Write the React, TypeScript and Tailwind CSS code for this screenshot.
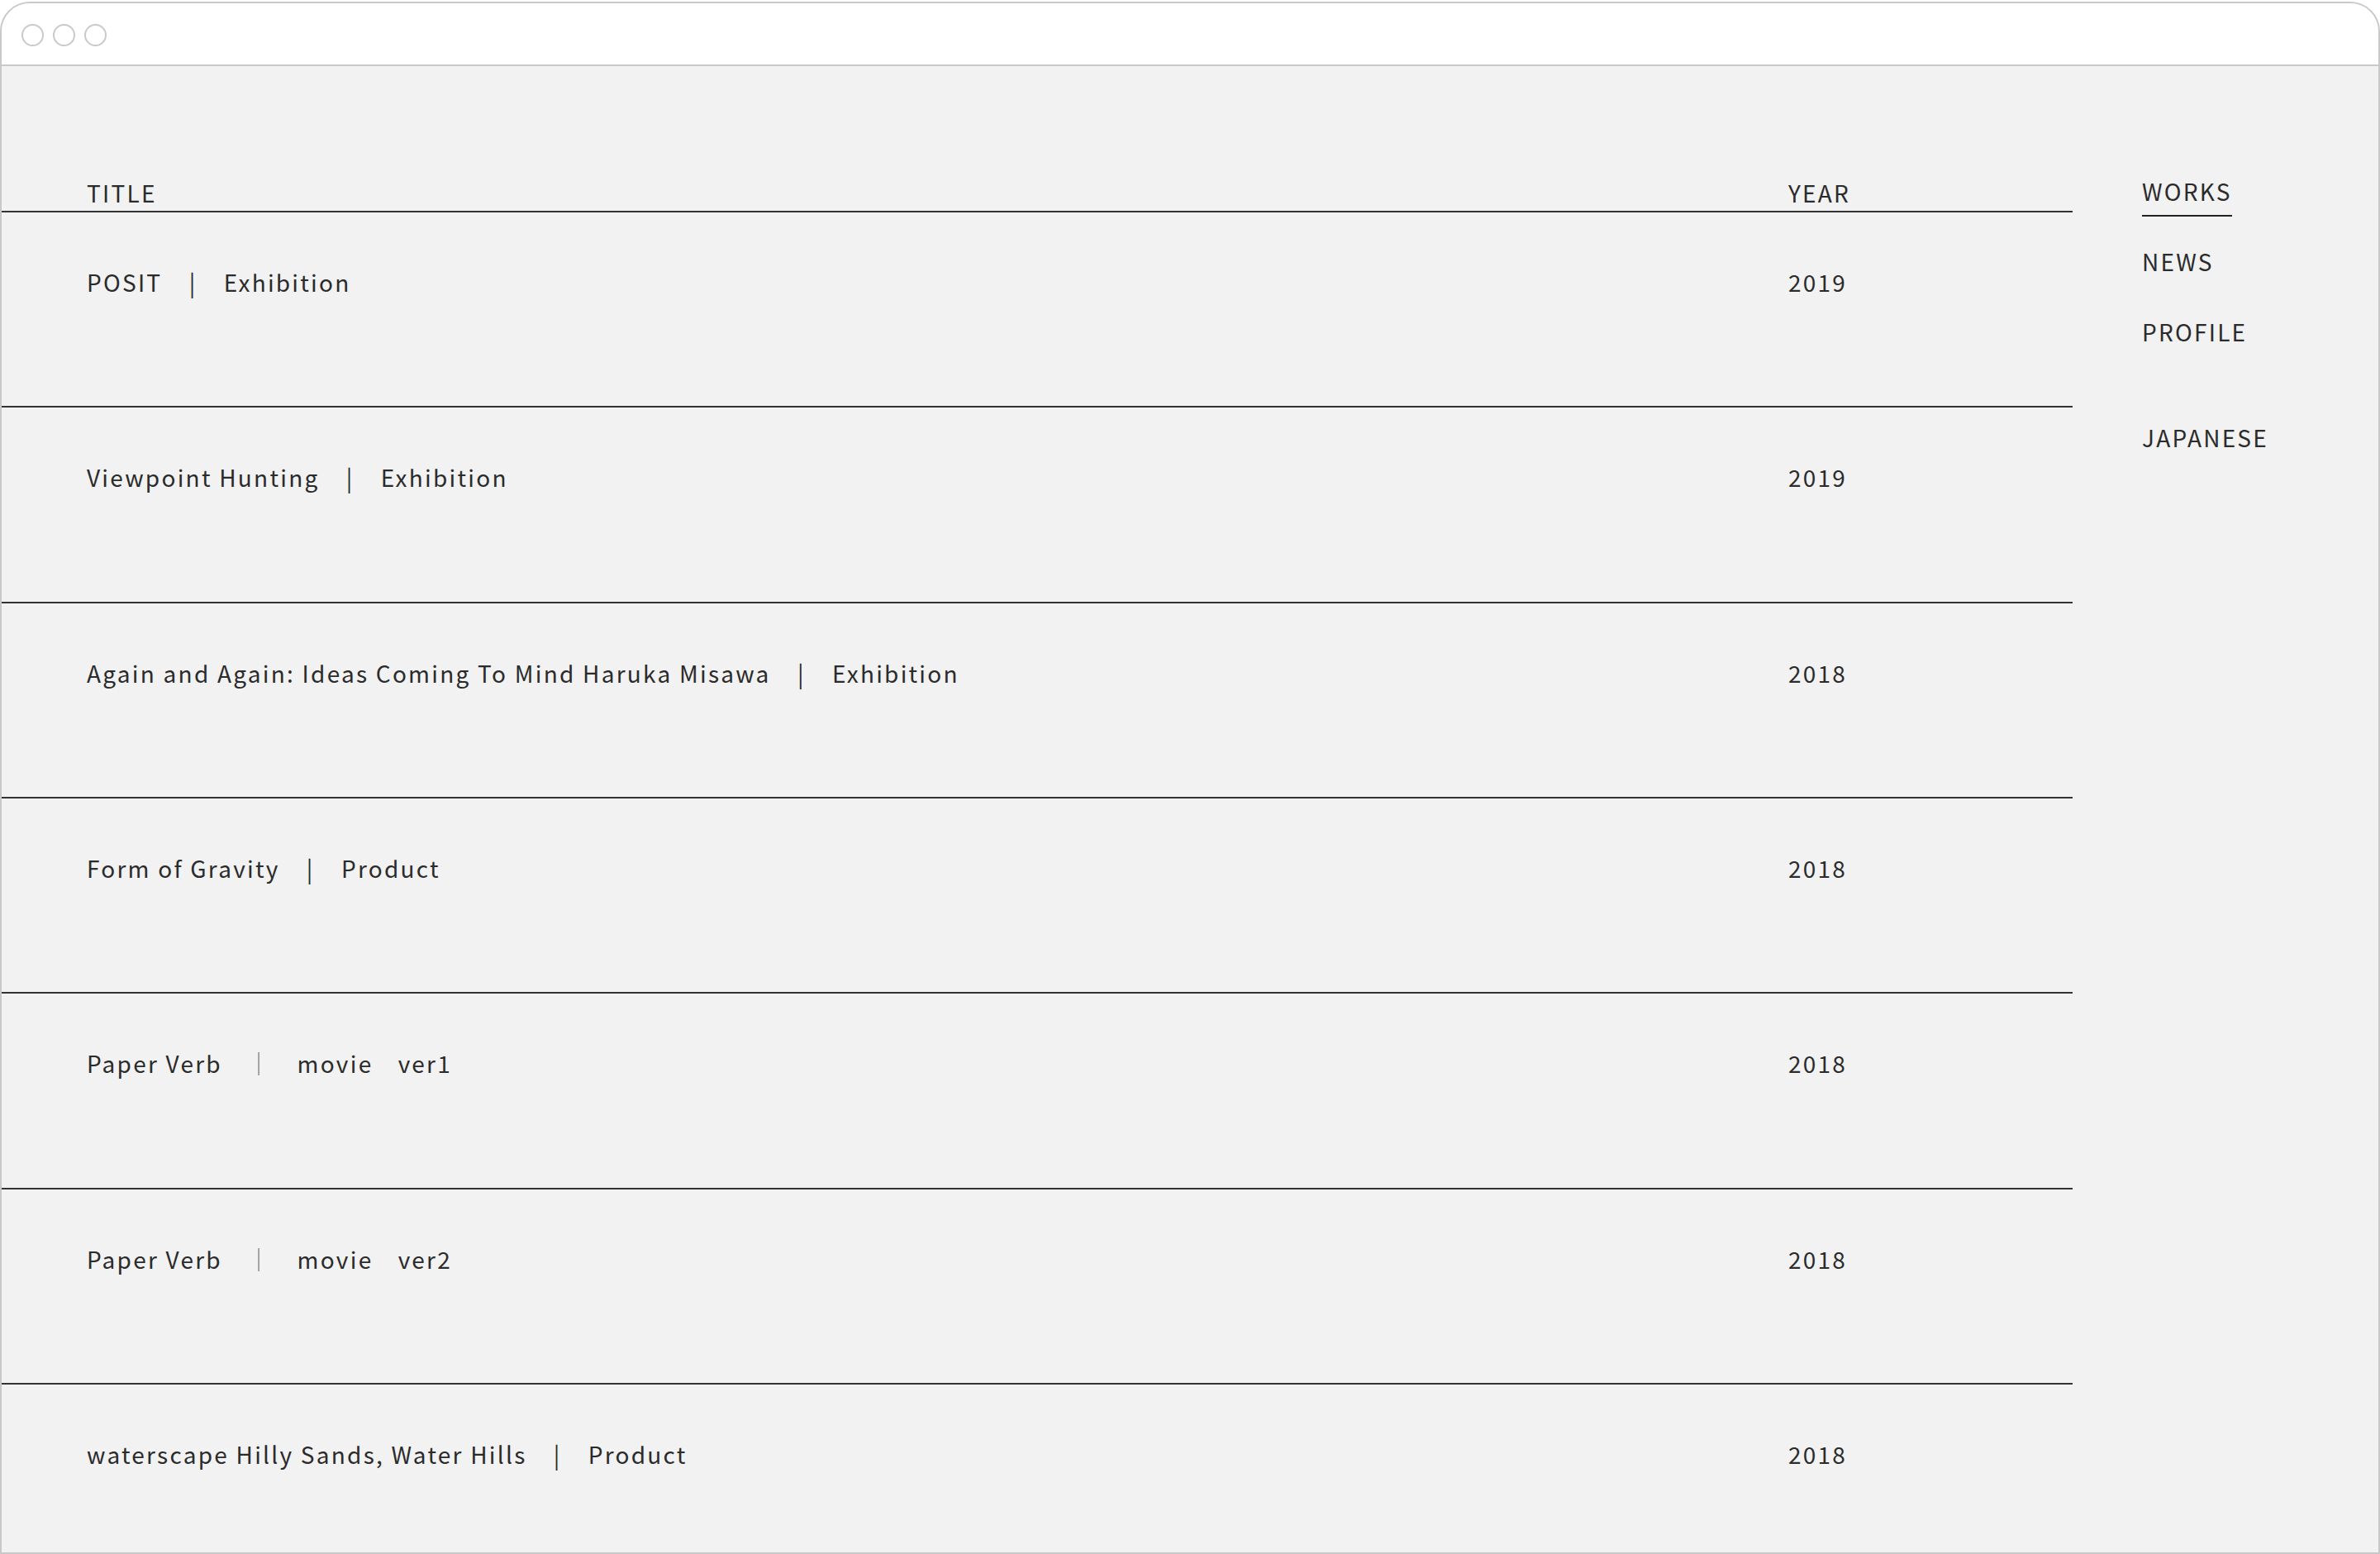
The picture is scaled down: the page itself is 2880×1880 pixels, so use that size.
const works = [
  { title: "POSIT", sep: "|", kind: "Exhibition", year: "2019" },
  { title: "Viewpoint Hunting", sep: "|", kind: "Exhibition", year: "2019" },
  { title: "Again and Again: Ideas Coming To Mind Haruka Misawa", sep: "|", kind: "Exhibition", year: "2018" },
  { title: "Form of Gravity", sep: "|", kind: "Product", year: "2018" },
  { title: "Paper Verb", sep: "｜", kind: "movie\u3000ver1", year: "2018" },
  { title: "Paper Verb", sep: "｜", kind: "movie\u3000ver2", year: "2018" },
  { title: "waterscape Hilly Sands, Water Hills", sep: "|", kind: "Product", year: "2018" },
];

const nav = ["WORKS", "NEWS", "PROFILE"];

export default function App() {
  return (
    <div
      className="w-[2880px] h-[1880px] bg-white pt-[2px] overflow-hidden text-[#2b2b2b] text-[28px] tracking-[0.08em]"
      style={{ fontFamily: '"Noto Sans CJK JP", "Noto Sans", sans-serif' }}
    >
      <div className="h-[1878px] flex flex-col border-2 border-[#c9c9c9] rounded-t-[36px] overflow-hidden bg-[#f2f2f2]">
        {/* title bar */}
        <div className="h-[76px] shrink-0 bg-white border-b-2 border-[#c9c9c9] flex items-center gap-[11px] pl-[24px] pt-[2px]">
          <span className="w-[27px] h-[27px] rounded-full border-2 border-[#c9c9c9]" />
          <span className="w-[27px] h-[27px] rounded-full border-2 border-[#c9c9c9]" />
          <span className="w-[27px] h-[27px] rounded-full border-2 border-[#c9c9c9]" />
        </div>

        <div className="flex flex-1 min-h-0">
          {/* works list */}
          <div className="w-[2506px] shrink-0">
            <div className="h-[177px] flex items-end border-b-2 border-[#333] pb-[3px] leading-[38px]">
              <div className="flex-1 pl-[103px]">TITLE</div>
              <div className="w-[344px]">YEAR</div>
            </div>
            {works.map((w, i) => (
              <div key={i} className="h-[236.33px] flex items-start border-b-2 border-[#333] pt-[63px] leading-[42px]">
                <div className="flex-1 pl-[103px] whitespace-pre">
                  {w.title}
                  {"\u3000"}
                  <span className={w.sep === "|" ? "mx-[2px]" : "text-[#777]"}>{w.sep}</span>
                  {"\u3000"}
                  {w.kind}
                </div>
                <div className="w-[344px]">{w.year}</div>
              </div>
            ))}
          </div>

          {/* side nav */}
          <div className="pl-[84px] pt-[130px] flex flex-col items-start leading-[42px]">
            <div className="flex flex-col items-start gap-[33px]">
              {nav.map((n) => (
                <span
                  key={n}
                  className={
                    "pb-[8px] border-b-2 " + (n === "WORKS" ? "border-[#222]" : "border-transparent")
                  }
                >
                  {n}
                </span>
              ))}
            </div>
            <span className="mt-[76px]">JAPANESE</span>
          </div>
        </div>
      </div>
    </div>
  );
}
